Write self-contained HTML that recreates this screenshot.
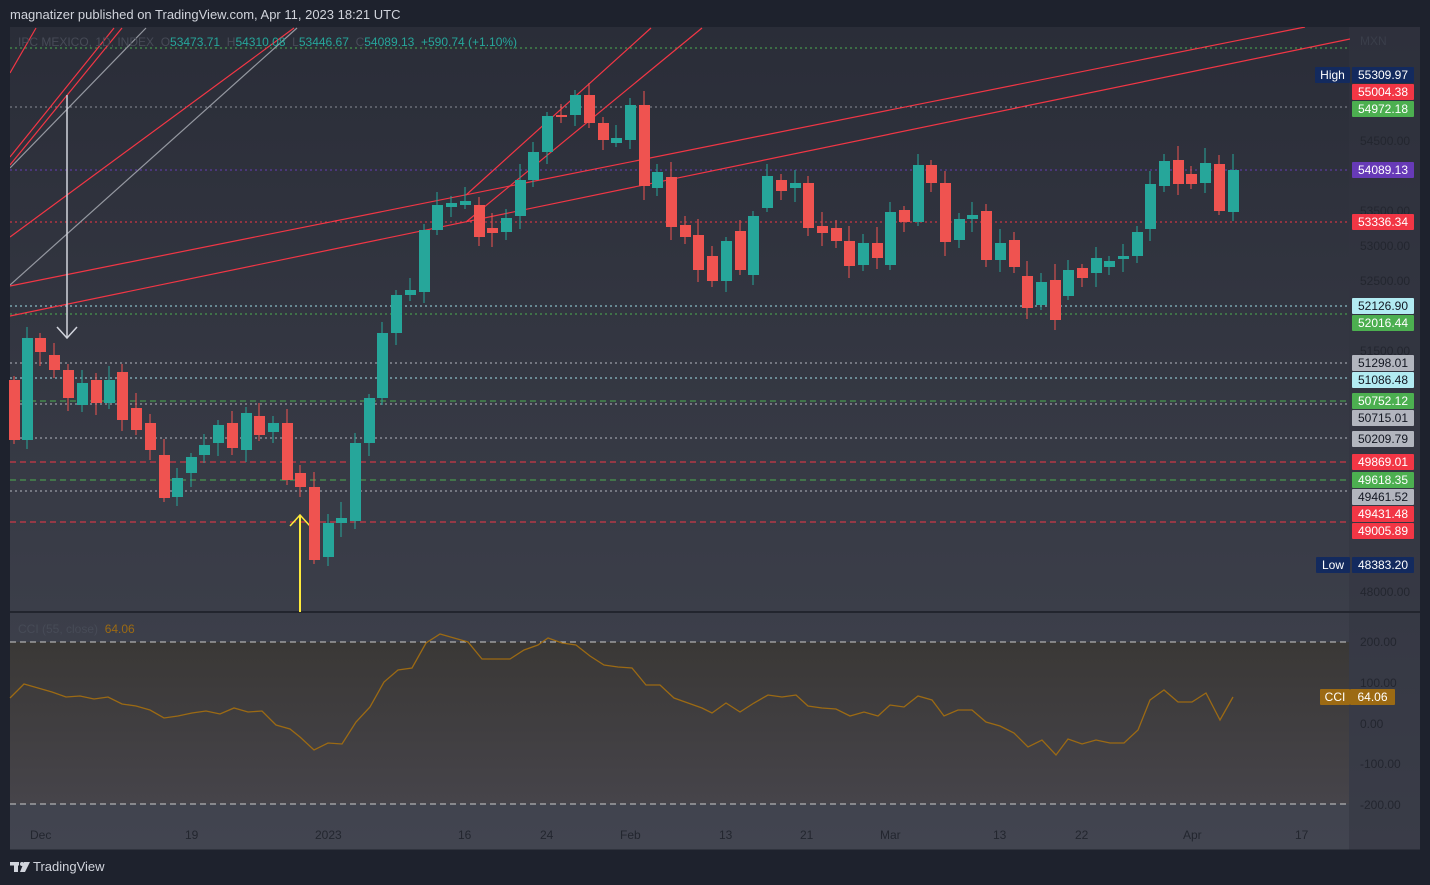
<!DOCTYPE html><html><head><meta charset="utf-8"><style>
body{margin:0;width:1430px;height:885px;background:#1e222d;font-family:"Liberation Sans",sans-serif;overflow:hidden;position:relative}
.t{position:absolute;color:#d1d4dc;font-size:12px}
.lb{position:absolute;left:1352px;width:62px;height:16px;font-size:12px;line-height:16px;text-align:center;color:#fff;border-radius:1px}
.ax{position:absolute;left:1360px;font-size:12px;color:#23262f}
</style></head><body>
<div class="t" style="left:10px;top:7px;font-size:13px">magnatizer published on TradingView.com, Apr 11, 2023 18:21 UTC</div>
<svg width="1430" height="885" style="position:absolute;left:0;top:0">
<defs><linearGradient id="g" x1="0" y1="0" x2="0" y2="1"><stop offset="0" stop-color="#2a2d38"/><stop offset="1" stop-color="#424550"/></linearGradient>
<linearGradient id="g2" x1="0" y1="0" x2="0" y2="1"><stop offset="0" stop-color="#3a3836"/><stop offset="1" stop-color="#46444a"/></linearGradient>
<clipPath id="cp"><rect x="10" y="27" width="1340" height="585"/></clipPath></defs>
<rect x="10" y="27" width="1410" height="823" fill="url(#g)"/>
<rect x="1349" y="27" width="71" height="823" fill="#31343f" opacity="0.5"/>
<line x1="10" y1="612" x2="1420" y2="612" fill="none" stroke="#22252e" stroke-width="2"/>
<rect x="10" y="642" width="1339" height="162" fill="url(#g2)"/>
<g id="hl" stroke-dasharray="2,3" stroke-width="1">
<line x1="10" x2="1349" y1="48" y2="48" stroke="#4caf50"/>
<line x1="10" x2="1349" y1="107" y2="107" stroke="#8a8d96"/>
<line x1="10" x2="1349" y1="170" y2="170" stroke="#673ab7"/>
<line x1="10" x2="1349" y1="222" y2="222" stroke="#f23645"/>
<line x1="10" x2="1349" y1="306" y2="306" stroke="#9fdde6"/>
<line x1="10" x2="1349" y1="314" y2="314" stroke="#4caf50"/>
<line x1="10" x2="1349" y1="363" y2="363" stroke="#b2b5be"/>
<line x1="10" x2="1349" y1="378" y2="378" stroke="#9fdde6"/>
<line x1="10" x2="1349" y1="401" y2="401" stroke="#4caf50" stroke-dasharray="6,4"/>
<line x1="10" x2="1349" y1="404" y2="404" stroke="#b2b5be"/>
<line x1="10" x2="1349" y1="438" y2="438" stroke="#b2b5be"/>
<line x1="10" x2="1349" y1="462" y2="462" stroke="#f23645" stroke-dasharray="6,4"/>
<line x1="10" x2="1349" y1="480" y2="480" stroke="#4caf50" stroke-dasharray="6,4"/>
<line x1="10" x2="1349" y1="491" y2="491" stroke="#b2b5be"/>
<line x1="10" x2="1349" y1="522" y2="522" stroke="#f23645" stroke-dasharray="6,4"/>
<line x1="10" x2="1349" y1="642" y2="642" stroke="#ccc" stroke-dasharray="6,4"/>
<line x1="10" x2="1349" y1="804" y2="804" stroke="#ccc" stroke-dasharray="6,4"/>
</g>
<g fill="none" stroke-width="1.2" clip-path="url(#cp)">
<line x1="10" y1="286" x2="1305" y2="27" stroke="#f23645"/>
<line x1="10" y1="316" x2="1350" y2="39" stroke="#f23645"/>
<line x1="466" y1="195" x2="651" y2="28" stroke="#f23645"/>
<line x1="466" y1="222" x2="702" y2="28" stroke="#f23645"/>
<line x1="10" y1="237" x2="294" y2="28" stroke="#f23645"/>
<line x1="10" y1="73" x2="36" y2="28" stroke="#f23645"/>
<line x1="10" y1="157" x2="114" y2="28" stroke="#f23645"/>
<line x1="10" y1="165" x2="122" y2="28" stroke="#f23645"/>
<line x1="10" y1="285" x2="297" y2="28" stroke="#9598a1"/>
<line x1="10" y1="168" x2="146" y2="28" stroke="#9598a1"/>
</g>
<g fill="none" stroke-width="1.2">
<line x1="67" y1="95" x2="67" y2="338" stroke="#d1d4dc" stroke-width="1.5"/>
<polyline points="57,327 67,338 77,327" stroke="#d1d4dc" stroke-width="1.5"/>
<line x1="300" y1="612" x2="300" y2="515" stroke="#ffeb3b" stroke-width="2"/>
<polyline points="290,526 300,515 310,526" stroke="#ffeb3b" stroke-width="1.5"/>
<polyline stroke="#9c6a13" stroke-width="1.3" points="10,698 24,684 38,688 52,692 66,697 80,696 94,699 108,697 122,704 136,706 150,710 164,718 178,716 192,713 206,711 220,714 234,708 248,712 262,711 276,725 290,729 300,737 314,750 328,743 342,744 356,722 370,707 384,682 398,670 412,668 426,643 440,634 454,638 468,642 482,659 496,659 510,659 524,650 538,645 548,638 562,643 576,645 590,656 604,665 618,667 632,668 646,685 660,685 674,698 688,703 702,708 712,713 726,703 740,712 754,703 768,695 782,697 796,695 808,706 822,708 836,709 850,716 864,712 878,716 890,705 904,707 918,696 932,700 944,716 958,710 972,710 986,722 1000,726 1014,733 1028,747 1042,740 1056,755 1068,739 1082,744 1096,740 1110,743 1124,743 1138,730 1150,700 1164,690 1178,702 1192,702 1206,693 1220,720 1233,697"/>
</g>
<g id="c"></g>
<line x1="10" y1="850" x2="1420" y2="850" stroke="#1e222d"/>
<g fill="#d1d4dc"><rect x="10" y="862" width="9" height="3.5"/><rect x="14" y="862" width="4" height="10"/><circle cx="22" cy="864" r="2"/><polygon points="24,862 30,862 25,872 20,872"/></g>
</svg>
<script>
var d=[[14,'r',380,440],[27,'g',338,440],[40,'r',338,352],[54,'r',355,370],[68,'r',370,398],[82,'g',383,405],[96,'r',380,403],[109,'g',380,403],[122,'r',372,420],[136,'r',408,430],[150,'r',423,450],[164,'r',455,498],[177,'g',478,497],[191,'g',457,473],[204,'g',445,455],[218,'g',425,443],[232,'r',423,448],[246,'g',413,450],[259,'r',416,435],[273,'g',423,432],[287,'r',423,480],[300,'r',473,487],[314,'r',487,560],[328,'g',523,557],[341,'g',518,523],[355,'g',443,521],[369,'g',398,443],[382,'g',333,398],[396,'g',295,333],[410,'g',290,295],[424,'g',230,292],[437,'g',205,230],[451,'g',203,207],[465,'g',201,205],[479,'r',205,237],[492,'r',228,233],[506,'g',218,232],[520,'g',180,216],[533,'g',152,180],[547,'g',116,152],[561,'r',115,117],[575,'g',95,115],[589,'r',95,123],[603,'r',123,140],[616,'g',138,143],[630,'g',105,140],[644,'r',105,186],[657,'g',172,188],[671,'r',177,227],[685,'r',225,237],[698,'r',235,270],[712,'r',256,281],[726,'g',241,281],[740,'r',231,270],[753,'g',216,275],[767,'g',176,208],[781,'r',180,191],[795,'g',183,188],[808,'r',183,228],[822,'r',226,233],[836,'r',228,241],[849,'r',241,266],[863,'g',243,265],[877,'r',243,258],[890,'g',212,265],[904,'r',210,222],[918,'g',165,222],[931,'r',165,183],[945,'r',183,242],[959,'g',219,240],[972,'g',215,219],[986,'r',211,260],[1000,'g',243,260],[1014,'r',240,267],[1027,'r',276,308],[1041,'g',282,305],[1055,'r',280,320],[1068,'g',270,296],[1082,'r',268,278],[1096,'g',258,273],[1109,'g',261,267],[1123,'g',256,259],[1137,'g',232,256],[1150,'g',184,229],[1164,'g',161,186],[1178,'r',160,184],[1191,'r',174,184],[1205,'g',163,183],[1219,'r',164,211],[1233,'g',170,212]];
var s='';d.forEach(function(c,i){var col=c[1]=='g'?'#26a69a':'#ef5350';var h=(i*7%13)+4,l=(i*5%11)+4;s+='<line x1="'+c[0]+'" x2="'+c[0]+'" y1="'+(c[2]-h)+'" y2="'+(c[3]+l)+'" stroke="'+col+'"/><rect x="'+(c[0]-5)+'" y="'+c[2]+'" width="11" height="'+Math.max(2,c[3]-c[2])+'" fill="'+col+'"/>';});
document.getElementById('c').innerHTML=s;
</script>
<div class="t" style="left:18px;top:35px;color:#474b57">IPC MEXICO, 1D, INDEX &nbsp;O<span style="color:#26a69a">53473.71</span> &nbsp;H<span style="color:#26a69a">54310.08</span> &nbsp;L<span style="color:#26a69a">53446.67</span> &nbsp;C<span style="color:#26a69a">54089.13 &nbsp;+590.74 (+1.10%)</span></div>
<div class="t" style="left:18px;top:622px;color:#474b57">CCI (55, close) &nbsp;<span style="color:#9c6a13">64.06</span></div>
<div class="ax" style="top:34px;color:#3a3e4a">MXN</div>
<div class="ax" style="top:134px">54500.00</div><div class="ax" style="top:204px">53500.00</div><div class="ax" style="top:239px">53000.00</div><div class="ax" style="top:274px">52500.00</div><div class="ax" style="top:344px">51500.00</div><div class="ax" style="top:585px">48000.00</div>
<div class="ax" style="top:635px">200.00</div><div class="ax" style="top:676px">100.00</div><div class="ax" style="top:717px">0.00</div><div class="ax" style="top:757px">-100.00</div><div class="ax" style="top:798px">-200.00</div>
<div class="lb" style="top:67px;left:1315px;width:35px;background:#132a5e">High</div>
<div class="lb" style="top:67px;background:#132a5e">55309.97</div>
<div class="lb" style="top:84px;background:#f23645">55004.38</div>
<div class="lb" style="top:101px;background:#4caf50">54972.18</div>
<div class="lb" style="top:162px;background:#673ab7">54089.13</div>
<div class="lb" style="top:214px;background:#f23645">53336.34</div>
<div class="lb" style="top:298px;background:#b2ebf2;color:#131722">52126.90</div>
<div class="lb" style="top:315px;background:#4caf50">52016.44</div>
<div class="lb" style="top:355px;background:#b2b5be;color:#131722">51298.01</div>
<div class="lb" style="top:372px;background:#b2ebf2;color:#131722">51086.48</div>
<div class="lb" style="top:393px;background:#4caf50">50752.12</div>
<div class="lb" style="top:410px;background:#b2b5be;color:#131722">50715.01</div>
<div class="lb" style="top:431px;background:#b2b5be;color:#131722">50209.79</div>
<div class="lb" style="top:454px;background:#f23645">49869.01</div>
<div class="lb" style="top:472px;background:#4caf50">49618.35</div>
<div class="lb" style="top:489px;background:#b2b5be;color:#131722">49461.52</div>
<div class="lb" style="top:506px;background:#f23645">49431.48</div>
<div class="lb" style="top:523px;background:#f23645">49005.89</div>
<div class="lb" style="top:557px;left:1316px;width:34px;background:#132a5e">Low</div>
<div class="lb" style="top:557px;background:#132a5e">48383.20</div>
<div class="lb" style="top:689px;left:1320px;width:30px;background:#9c6a13">CCI</div>
<div class="lb" style="top:689px;left:1350px;width:45px;background:#9c6a13">64.06</div>
<div class="t" style="top:828px;left:30px;color:#23262f">Dec</div><div class="t" style="top:828px;left:185px;color:#23262f">19</div><div class="t" style="top:828px;left:315px;color:#23262f">2023</div><div class="t" style="top:828px;left:458px;color:#23262f">16</div><div class="t" style="top:828px;left:540px;color:#23262f">24</div><div class="t" style="top:828px;left:620px;color:#23262f">Feb</div><div class="t" style="top:828px;left:719px;color:#23262f">13</div><div class="t" style="top:828px;left:800px;color:#23262f">21</div><div class="t" style="top:828px;left:880px;color:#23262f">Mar</div><div class="t" style="top:828px;left:993px;color:#23262f">13</div><div class="t" style="top:828px;left:1075px;color:#23262f">22</div><div class="t" style="top:828px;left:1183px;color:#23262f">Apr</div><div class="t" style="top:828px;left:1295px;color:#23262f">17</div>
<div class="t" style="top:859px;left:33px;font-size:13px;color:#d1d4dc">TradingView</div>
</body></html>
